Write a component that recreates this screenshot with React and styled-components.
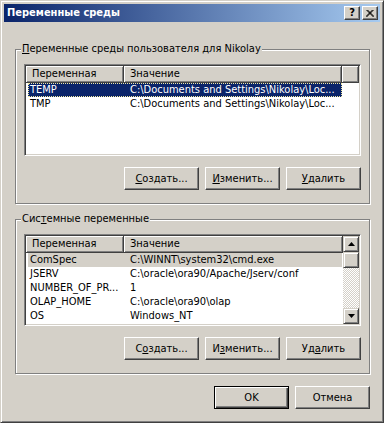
import styled, { createGlobalStyle } from 'styled-components';

const GlobalStyle = createGlobalStyle`
  html, body {
    margin: 0;
    padding: 0;
    background: #d4d0c8;
  }
  body {
    font-family: "DejaVu Sans Condensed", Tahoma, "Liberation Sans", sans-serif;
    font-size: 11px;
    color: #000;
  }
`;

const Window = styled.div`
  box-sizing: border-box;
  width: 384px;
  height: 423px;
  background: #d4d0c8;
  border: 1px solid;
  border-color: #d4d0c8 #404040 #404040 #d4d0c8;
  box-shadow: inset 1px 1px 0 #fff, inset -1px -1px 0 #808080;
  padding: 3px;
`;

const TitleBar = styled.div`
  height: 18px;
  display: flex;
  align-items: center;
  justify-content: space-between;
  background: linear-gradient(to right, #0a246a, #a6caf0);
  padding: 0 2px 0 3px;
`;

const TitleText = styled.span`
  color: #fff;
  font-weight: bold;
  font-size: 11px;
  line-height: 18px;
`;

const CaptionButtons = styled.div`
  display: flex;
  gap: 2px;
`;

const CaptionButton = styled.div`
  box-sizing: border-box;
  width: 16px;
  height: 14px;
  display: flex;
  align-items: center;
  justify-content: center;
  background: #d4d0c8;
  border: 1px solid;
  border-color: #fff #404040 #404040 #fff;
  box-shadow: inset -1px -1px 0 #808080;
  font-weight: bold;
  font-size: 11px;
  line-height: 12px;
  color: #000;
`;

const Body = styled.div`
  padding: 27px 10px 0 11px;
`;

const Group = styled.div`
  position: relative;
  box-sizing: border-box;
  height: 155px;
  margin-top: ${(p) => p.$gap || 0}px;
  border: 1px solid #808080;
  box-shadow: 1px 1px 0 #fff, inset 1px 1px 0 #fff;
  padding: 14px 8px 0 8px;
`;

const GroupLabel = styled.span`
  position: absolute;
  top: -8px;
  left: 5px;
  padding: 0 1px;
  background: #d4d0c8;
  line-height: 14px;
  white-space: nowrap;
`;

const ListView = styled.div`
  box-sizing: border-box;
  height: 92px;
  display: flex;
  background: #fff;
  border: 1px solid;
  border-color: #808080 #fff #fff #808080;
  box-shadow: inset 1px 1px 0 #404040, inset -1px -1px 0 #d4d0c8;
  padding: 1px;
  overflow: hidden;
`;

const ListMain = styled.div`
  flex: 1;
  min-width: 0;
`;

const Header = styled.div`
  display: flex;
  height: 17px;
`;

const HeaderCell = styled.div`
  box-sizing: border-box;
  width: ${(p) => (p.$width ? `${p.$width}px` : 'auto')};
  flex: ${(p) => (p.$width ? 'none' : '1')};
  height: 17px;
  background: #d4d0c8;
  border-right: 1px solid #404040;
  border-bottom: 1px solid #404040;
  box-shadow: inset 1px 1px 0 #fff, inset -1px -1px 0 #808080;
  padding-left: 6px;
  line-height: 16px;
  white-space: nowrap;
  overflow: hidden;
`;

const Row = styled.div`
  display: flex;
  width: 314px;
  height: 14px;
  margin-left: 2px;
  box-sizing: border-box;
  line-height: 14px;
  white-space: nowrap;
  background: ${(p) => (p.$state === 'active' ? '#0a246a' : p.$state === 'inactive' ? '#d4d0c8' : 'transparent')};
  color: ${(p) => (p.$state === 'active' ? '#fff' : '#000')};
  outline: ${(p) => (p.$state === 'active' ? '1px dotted #f0e8a0' : 'none')};
  outline-offset: -1px;
`;

const Cell = styled.div`
  box-sizing: border-box;
  width: ${(p) => p.$width}px;
  padding-left: ${(p) => p.$pad}px;
  overflow: hidden;
`;

const ScrollBar = styled.div`
  width: 16px;
  display: flex;
  flex-direction: column;
`;

const ScrollButton = styled.div`
  box-sizing: border-box;
  width: 16px;
  height: 16px;
  display: flex;
  align-items: center;
  justify-content: center;
  background: #d4d0c8;
  border: 1px solid;
  border-color: #d4d0c8 #404040 #404040 #d4d0c8;
  box-shadow: inset 1px 1px 0 #fff, inset -1px -1px 0 #808080;
`;

const ScrollTrack = styled.div`
  flex: 1;
  background: repeating-conic-gradient(#fff 0 25%, #d4d0c8 0 50%) 0 0 / 2px 2px;
`;

const ButtonRow = styled.div`
  display: flex;
  justify-content: flex-end;
  gap: 6px;
  margin-top: 11px;
`;

const PushButton = styled.div`
  box-sizing: border-box;
  width: 75px;
  height: 23px;
  display: flex;
  align-items: center;
  justify-content: center;
  background: #d4d0c8;
  border: 1px solid;
  border-color: ${(p) => (p.$default ? '#000' : '#fff #404040 #404040 #fff')};
  box-shadow: ${(p) =>
    p.$default
      ? 'inset 1px 1px 0 #fff, inset -1px -1px 0 #404040, inset -2px -2px 0 #808080'
      : 'inset -1px -1px 0 #808080'};
  white-space: nowrap;
`;

const DialogButtons = styled.div`
  display: flex;
  justify-content: flex-end;
  gap: 6px;
  margin-top: 12px;
`;

const Arrow = ({ down }) => (
  <svg width="7" height="4" viewBox="0 0 7 4">
    <polygon points={down ? '0,0 7,0 3.5,4' : '0,4 7,4 3.5,0'} fill="#000" />
  </svg>
);

const CloseGlyph = () => (
  <svg width="8" height="7" viewBox="0 0 8 7">
    <path d="M0.5 0 L7.5 7 M1.5 0 L8 6.5 M7.5 0 L0.5 7 M6.5 0 L0 6.5" stroke="#000" strokeWidth="1" fill="none" />
  </svg>
);

const userVars = [
  ['TEMP', 'C:\\Documents and Settings\\Nikolay\\Loc...', 'active'],
  ['TMP', 'C:\\Documents and Settings\\Nikolay\\Loc...'],
];

const sysVars = [
  ['ComSpec', 'C:\\WINNT\\system32\\cmd.exe', 'inactive'],
  ['JSERV', 'C:\\oracle\\ora90/Apache/Jserv/conf'],
  ['NUMBER_OF_PR...', '1'],
  ['OLAP_HOME', 'C:\\oracle\\ora90\\olap'],
  ['OS', 'Windows_NT'],
];

const Rows = ({ items }) =>
  items.map(([name, value, state]) => (
    <Row key={name} $state={state}>
      <Cell $width={95} $pad={2}>{name}</Cell>
      <Cell $width={219} $pad={7}>{value}</Cell>
    </Row>
  ));

const App = () => {
  return (
    <>
      <GlobalStyle />
      <Window>
        <TitleBar>
          <TitleText>Переменные среды</TitleText>
          <CaptionButtons>
            <CaptionButton>?</CaptionButton>
            <CaptionButton><CloseGlyph /></CaptionButton>
          </CaptionButtons>
        </TitleBar>
        <Body>
          <Group>
            <GroupLabel><u>П</u>еременные среды пользователя для Nikolay</GroupLabel>
            <ListView>
              <ListMain>
                <Header>
                  <HeaderCell $width={98}>Переменная</HeaderCell>
                  <HeaderCell $width={218}>Значение</HeaderCell>
                  <HeaderCell />
                </Header>
                <Rows items={userVars} />
              </ListMain>
            </ListView>
            <ButtonRow>
              <PushButton><u>С</u>оздать...</PushButton>
              <PushButton><u>И</u>зменить...</PushButton>
              <PushButton><u>У</u>далить</PushButton>
            </ButtonRow>
          </Group>
          <Group $gap={15}>
            <GroupLabel>Сис<u>т</u>емные переменные</GroupLabel>
            <ListView>
              <ListMain>
                <Header>
                  <HeaderCell $width={98}>Переменная</HeaderCell>
                  <HeaderCell>Значение</HeaderCell>
                </Header>
                <Rows items={sysVars} />
              </ListMain>
              <ScrollBar>
                <ScrollButton><Arrow /></ScrollButton>
                <ScrollButton />
                <ScrollTrack />
                <ScrollButton><Arrow down /></ScrollButton>
              </ScrollBar>
            </ListView>
            <ButtonRow>
              <PushButton>С<u>о</u>здать...</PushButton>
              <PushButton>И<u>з</u>менить...</PushButton>
              <PushButton>Уд<u>а</u>лить</PushButton>
            </ButtonRow>
          </Group>
          <DialogButtons>
            <PushButton $default>OK</PushButton>
            <PushButton>Отмена</PushButton>
          </DialogButtons>
        </Body>
      </Window>
    </>
  );
};

export default App;
